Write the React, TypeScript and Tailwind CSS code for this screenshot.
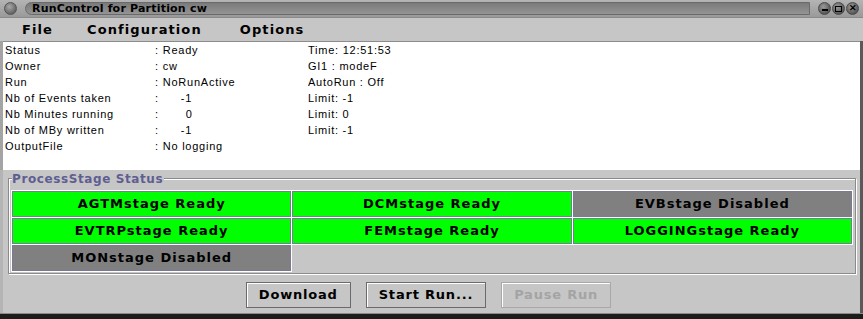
import { ReactNode } from "react";

const info: [string, string, number, string][] = [
  ["Status", "Ready", 4, "Time: 12:51:53"],
  ["Owner", "cw", 4, "GI1 : modeF"],
  ["Run", "NoRunActive", 4, "AutoRun : Off"],
  ["Nb of Events taken", "-1", 22, "Limit: -1"],
  ["Nb Minutes running", "0", 27, "Limit: 0"],
  ["Nb of MBy written", "-1", 22, "Limit: -1"],
  ["OutputFile", "No logging", 4, ""],
];

const stages: [string, boolean][] = [
  ["AGTMstage Ready", true],
  ["DCMstage Ready", true],
  ["EVBstage Disabled", false],
  ["EVTRPstage Ready", true],
  ["FEMstage Ready", true],
  ["LOGGINGstage Ready", true],
  ["MONstage Disabled", false],
];

function WinButton({ children }: { children: ReactNode }) {
  return (
    <div className="w-[13px] h-[13px] rounded-full bg-[radial-gradient(circle_at_40%_35%,#9a9a9a,#3c3c3c)] border border-[#4a4a4a] flex items-center justify-center">
      {children}
    </div>
  );
}

function Button({ label, disabled }: { label: string; disabled?: boolean }) {
  return (
    <button
      className={
        "h-[26px] px-[12px] border bg-[#c6c6c6] shadow-[inset_1px_1px_0_#ffffff] text-[13px] font-bold tracking-[0.8px] " +
        (disabled ? "border-[#a8a8a8] text-[#a4a4a4]" : "border-[#6a6a6a] text-black")
      }
      style={{ fontFamily: '"DejaVu Sans", sans-serif' }}
    >
      {label}
    </button>
  );
}

export default function App() {
  return (
    <div className="w-[863px] h-[319px] bg-[#c6c6c6] flex flex-col overflow-hidden" style={{ fontFamily: '"Liberation Sans", Arial, sans-serif' }}>
      {/* title bar */}
      <div className="h-[18px] bg-gradient-to-b from-[#b4b4b4] to-[#9a9a9a] flex items-center pl-[4px] pr-[4px] gap-[8px] border-b border-[#8a8a8a]">
        <div className="w-[13px] h-[13px] rounded-full bg-[radial-gradient(circle_at_40%_35%,#a8a8a8,#4a4a4a)] border border-[#555]" />
        <div className="flex-1 h-[13px] rounded-l-full bg-gradient-to-b from-[#7a7a7a] to-[#949494] border border-[#6a6a6a] flex items-center pl-[6px]">
          <span className="text-[11px] font-bold text-black leading-none tracking-[0.2px]" style={{ fontFamily: '"DejaVu Sans", sans-serif' }}>
            RunControl for Partition cw
          </span>
        </div>
        <div className="flex gap-[1px]">
          <WinButton>
            <div className="w-[6px] h-[2px] bg-black mt-[3px]" />
          </WinButton>
          <WinButton>
            <div className="w-[7px] h-[6px] border border-black" />
          </WinButton>
          <WinButton>
            <span className="text-[9px] font-bold leading-none text-black">✕</span>
          </WinButton>
        </div>
      </div>

      {/* menu bar */}
      <div className="h-[23px] flex items-center text-[13px] font-bold tracking-[1.1px] text-black" style={{ fontFamily: '"DejaVu Sans", sans-serif' }}>
        <span className="ml-[22px]">File</span>
        <span className="ml-[34px]">Configuration</span>
        <span className="ml-[38px]">Options</span>
      </div>

      {/* info panel */}
      <div className="flex border-l-[3px] border-[#a4a4a4] border-r-[3px] border-r-[#5a5a5a]">
        <div className="flex-1 bg-white h-[129px] border-t border-[#8c8c8c] text-[11px] text-black tracking-[0.75px]">
          {info.map(([label, value, off, extra]) => (
            <div key={label} className="grid grid-cols-[150px_153px_1fr] h-[16px] items-center pl-[2px]">
              <span>{label}</span>
              <span className="flex whitespace-pre">
                <span>:</span>
                <span style={{ marginLeft: off }}>{value}</span>
              </span>
              <span>{extra}</span>
            </div>
          ))}
        </div>
      </div>

      {/* process stage frame */}
      <div className="flex-1 flex flex-col border-r-[3px] border-r-[#5a5a5a] border-l-[3px] border-l-[#b4b4b4]">
        <div className="relative mt-[8px] ml-[5px] mr-[4px] h-[96px] border border-[#8a8a8a] shadow-[inset_1px_1px_0_#ffffff,1px_1px_0_#ffffff] pt-[12px] px-[3px]">
          <span
            className="absolute -top-[8px] left-[3px] bg-[#c6c6c6] pr-[1px] text-[12px] font-bold text-[#5e5e92] tracking-[0.6px] leading-[16px]"
            style={{ fontFamily: '"DejaVu Sans", sans-serif' }}
          >
            ProcessStage Status
          </span>
          <div className="grid grid-cols-3 gap-[1px]">
            {stages.map(([name, ok]) => (
              <div
                key={name}
                className={
                  "h-[26px] border border-[#7a7a96] shadow-[0_0_0_1px_#ffffff] flex items-center justify-center text-[13px] font-bold text-black tracking-[1px] " +
                  (ok ? "bg-[#00ff00]" : "bg-[#808080]")
                }
                style={{ fontFamily: '"DejaVu Sans", sans-serif' }}
              >
                {name}
              </div>
            ))}
          </div>
        </div>

        {/* buttons */}
        <div className="flex justify-center gap-[15px] mt-[8px] pr-[6px]">
          <Button label="Download" />
          <Button label="Start Run..." />
          <Button label="Pause Run" disabled />
        </div>
      </div>

      {/* bottom edge */}
      <div className="h-[1px] bg-[#8a8a8a] mt-auto" />
      <div className="h-[5px] bg-[#1c1c1c]" />
    </div>
  );
}
